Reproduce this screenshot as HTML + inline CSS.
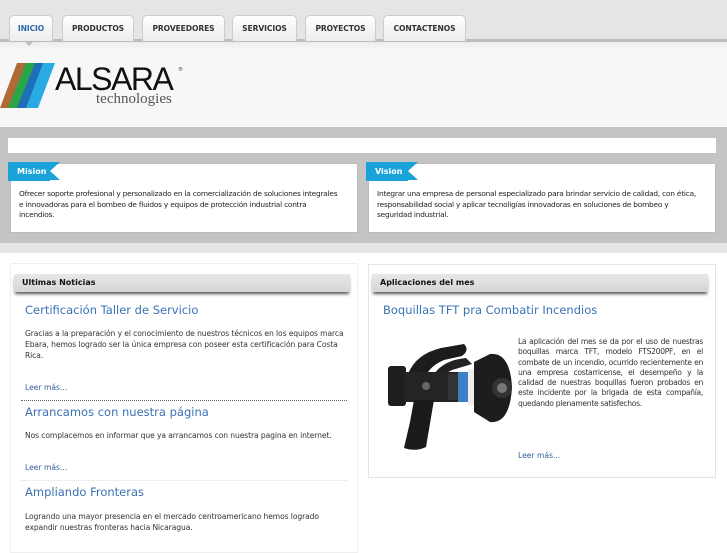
<!DOCTYPE html>
<html><head><meta charset="utf-8"><style>
*{margin:0;padding:0;box-sizing:border-box}
body{width:727px;height:545px;overflow:hidden;background:#fff;font-family:"DejaVu Sans",sans-serif;position:relative}
.a{position:absolute}
.tab{position:absolute;top:15px;height:26px;background:linear-gradient(#fff,#ececec);border:1px solid #ccc;border-bottom:none;border-radius:5px 5px 0 0;font:bold 7.6px "DejaVu Sans",sans-serif;color:#333;text-align:center;line-height:25px;letter-spacing:-0.1px}
.box{position:absolute;background:#fff;border:1px solid #bbb}
.rib{position:absolute;left:-3px;top:-2px;height:19px;background:#1aa3d8;color:#fff;font:bold 8px "DejaVu Sans",sans-serif;line-height:19px;padding-left:9px}
.rib:after{content:"";position:absolute;right:-10px;top:0;border-style:solid;border-width:9.5px 10px 9.5px 0;border-color:#1aa3d8 transparent #1aa3d8 transparent}
.txt{font-size:7.4px;color:#222;line-height:10.5px;letter-spacing:-0.22px;white-space:nowrap}
.hd{position:absolute;height:18px;background:linear-gradient(#e8e8e8,#d6d6d6);box-shadow:0 3px 3px -1px #555;font:bold 8px "DejaVu Sans",sans-serif;color:#111;line-height:18px;padding-left:8px}
.t{position:absolute;color:#3a72b5;font-size:11.5px}
.p{position:absolute;font-size:7.6px;color:#333;line-height:11px;letter-spacing:-0.1px}
.l{position:absolute;font-size:7.6px;color:#2f5f9a}
</style></head><body>
<div class="a" style="left:0;top:0;width:727px;height:40px;background:#e5e5e5"></div>
<div class="a" style="left:0;top:39px;width:727px;height:3px;background:#bdbdbd"></div>
<div class="a" style="left:0;top:42px;width:727px;height:85px;background:linear-gradient(#ececec,#f7f7f7 8px,#f7f7f7)"></div>
<div class="tab" style="left:9px;width:44px;color:#2a6aab">INICIO</div>
<div class="tab" style="left:62px;width:72px">PRODUCTOS</div>
<div class="tab" style="left:142px;width:83px">PROVEEDORES</div>
<div class="tab" style="left:232px;width:65px">SERVICIOS</div>
<div class="tab" style="left:305px;width:71px">PROYECTOS</div>
<div class="tab" style="left:383px;width:83px">CONTACTENOS</div>
<div class="a" style="left:24px;top:41px;border-style:solid;border-width:5px 5px 0 5px;border-color:#bdbdbd transparent transparent"></div>
<svg class="a" style="left:0;top:63px" width="60" height="46"><polygon points="17,0 28,0 11,45 0,45" fill="#b06a35"/><polygon points="26,0 36,0 19,45 8,45" fill="#2aa64a"/><polygon points="35,0 44,0 27,45 17,45" fill="#1e6fb5"/><polygon points="43,0 55,0 38,45 26,45" fill="#29aae2"/></svg>
<div class="a" style="left:55px;top:61px;font:32px 'Liberation Sans',sans-serif;color:#111;letter-spacing:-1.5px;line-height:36px">ALSARA</div>
<div class="a" style="left:178px;top:67px;font-size:5px;color:#333">®</div>
<div class="a" style="left:96px;top:90px;font:15px 'Liberation Serif',serif;color:#555;line-height:18px">technologies</div>
<div class="a" style="left:0;top:127px;width:727px;height:116px;background:#c4c4c4"></div>
<div class="a" style="left:0;top:243px;width:727px;height:10px;background:#e5e5e5"></div>
<div class="a" style="left:8px;top:138px;width:708px;height:15px;background:#fff"></div>
<div class="box" style="left:10px;top:163px;width:348px;height:70px"><div class="rib" style="width:42px">Mision</div><div class="txt a" style="left:8px;top:25px">Ofrecer soporte profesional y personalizado en la comercialización de soluciones integrales<br>e innovadoras para el bombeo de fluidos y equipos de protección industrial contra<br>incendios.</div></div>
<div class="box" style="left:368px;top:163px;width:348px;height:70px"><div class="rib" style="width:42px">Vision</div><div class="txt a" style="left:8px;top:25px">Integrar una empresa de personal especializado para brindar servicio de calidad, con ética,<br>responsabilidad social y aplicar tecnoligías innovadoras en soluciones de bombeo y<br>seguridad industrial.</div></div>
<div class="a" style="left:10px;top:263px;width:348px;height:290px;border:1px solid #eee"></div>
<div class="a" style="left:368px;top:264px;width:348px;height:214px;border:1px solid #e4e4e4"></div>
<div class="hd" style="left:14px;top:274px;width:336px">Ultimas Noticias</div>
<div class="hd" style="left:372px;top:274px;width:336px">Aplicaciones del mes</div>
<div class="t" style="left:25px;top:303px">Certificación Taller de Servicio</div>
<div class="p" style="left:25px;top:328px;width:325px">Gracias a la preparación y el conocimiento de nuestros técnicos en los equipos marca Ebara, hemos logrado ser la única empresa con poseer esta certificación para Costa Rica.</div>
<div class="l" style="left:25px;top:383px">Leer más...</div>
<div class="a" style="left:21px;top:400px;width:326px;border-top:1px dotted #666"></div>
<div class="t" style="left:25px;top:405px">Arrancamos con nuestra página</div>
<div class="p" style="left:25px;top:430px">Nos complacemos en informar que ya arrancamos con nuestra pagina en internet.</div>
<div class="l" style="left:25px;top:463px">Leer más...</div>
<div class="a" style="left:21px;top:480px;width:326px;border-top:1px dotted #ddd"></div>
<div class="t" style="left:25px;top:485px">Ampliando Fronteras</div>
<div class="p" style="left:25px;top:511px;width:318px">Logrando una mayor presencia en el mercado centroamericano hemos logrado expandir nuestras fronteras hacia Nicaragua.</div>
<div class="t" style="left:383px;top:303px">Boquillas TFT pra Combatir Incendios</div>
<svg class="a" style="left:386px;top:342px" width="130" height="110">
<path d="M22,32 Q30,12 55,6 L78,2 Q84,8 76,14 L58,18 Q44,24 40,34 Z" fill="#1c1c1c"/>
<path d="M48,32 Q58,18 80,16 L86,22 L66,28 Q58,32 58,36 Z" fill="#222"/>
<rect x="2" y="24" width="18" height="40" rx="3" fill="#1e1e1e"/>
<rect x="18" y="30" width="60" height="30" fill="#242424"/>
<path d="M28,58 L48,58 L40,105 Q30,110 18,106 L24,80 Z" fill="#1a1a1a"/>
<circle cx="40" cy="44" r="4" fill="#666"/>
<rect x="62" y="32" width="10" height="26" fill="#333"/>
<rect x="72" y="30" width="10" height="30" fill="#3a7fc8"/>
<rect x="82" y="27" width="6" height="36" fill="#eee"/>
<path d="M88,20 L104,12 Q124,10 126,45 Q124,82 104,80 L88,70 Z" fill="#1d1d1d"/>
<circle cx="116" cy="46" r="10" fill="#333"/><circle cx="116" cy="46" r="5" fill="#777"/>
</svg>
<div class="p" style="left:518px;top:337px;width:185px;text-align:justify;line-height:10.3px;letter-spacing:-0.3px">La aplicación del mes se da por el uso de nuestras boquillas marca TFT, modelo FTS200PF, en el combate de un incendio, ocurrido recientemente en una empresa costarricense, el desempeño y la calidad de nuestras boquillas fueron probados en este incidente por la brigada de esta compañía, quedando plenamente satisfechos.</div>
<div class="l" style="left:518px;top:451px">Leer más...</div>
</body></html>
